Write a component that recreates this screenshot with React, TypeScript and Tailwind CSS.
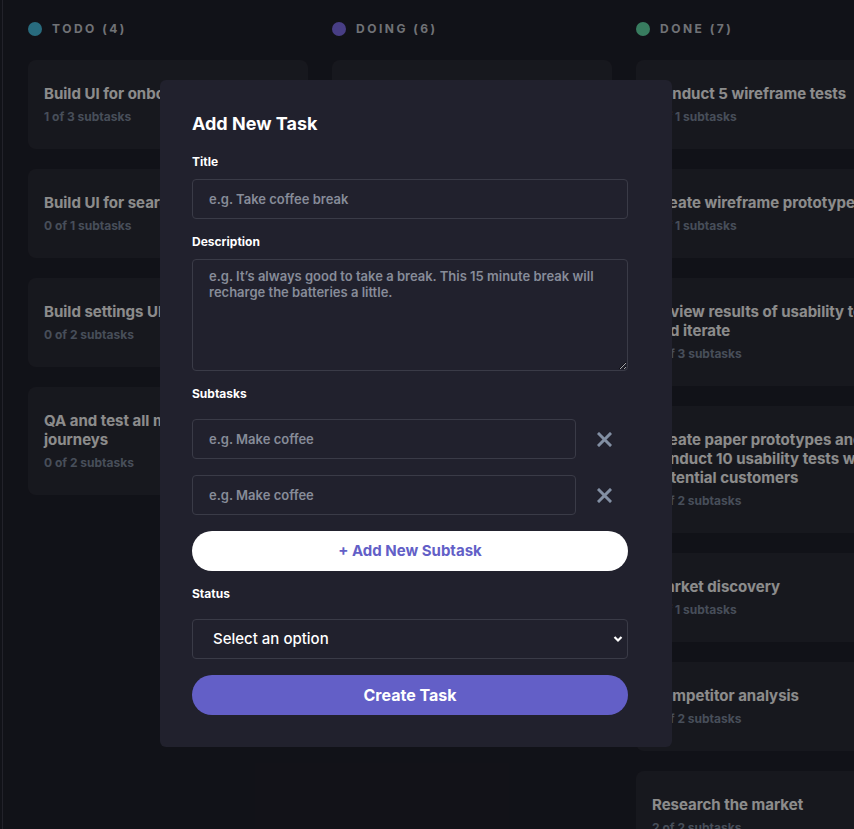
import React from 'react';

type Task = { title: string; done: number; total: number };
type Column = { name: string; dot: string; tasks: Task[] };

const columns: Column[] = [
  {
    name: 'TODO',
    dot: 'bg-[#49c4e5]',
    tasks: [
      { title: 'Build UI for onboarding flow', done: 1, total: 3 },
      { title: 'Build UI for search', done: 0, total: 1 },
      { title: 'Build settings UI', done: 0, total: 2 },
      { title: 'QA and test all major user journeys', done: 0, total: 2 },
    ],
  },
  {
    name: 'DOING',
    dot: 'bg-[#8471f2]',
    tasks: [
      { title: 'Design settings and search pages', done: 1, total: 3 },
      { title: 'Add account endpoints', done: 2, total: 3 },
      { title: 'Design onboarding flow', done: 1, total: 3 },
      { title: 'Add search endpoints', done: 1, total: 2 },
      { title: 'Add authentication endpoints', done: 1, total: 2 },
      { title: 'Research pricing points of various competitors and trial different business models', done: 1, total: 3 },
    ],
  },
  {
    name: 'DONE',
    dot: 'bg-[#67e2ae]',
    tasks: [
      { title: 'Conduct 5 wireframe tests', done: 1, total: 1 },
      { title: 'Create wireframe prototype', done: 1, total: 1 },
      { title: 'Review results of usability tests and iterate', done: 3, total: 3 },
      { title: 'Create paper prototypes and conduct 10 usability tests with potential customers', done: 2, total: 2 },
      { title: 'Market discovery', done: 1, total: 1 },
      { title: 'Competitor analysis', done: 2, total: 2 },
      { title: 'Research the market', done: 2, total: 2 },
    ],
  },
];

const fieldClass =
  'w-full rounded border border-[#3a3b47] bg-transparent px-4 text-[13px] font-semibold text-white placeholder:text-[#878c99] focus:outline-none';

const Cross = () => (
  <svg width="15" height="15" viewBox="0 0 15 15" fill="none">
    <path d="M2 2L13 13M13 2L2 13" stroke="#828fa3" strokeWidth="3" strokeLinecap="square" />
  </svg>
);

const App: React.FC = () => {
  return (
    <div className="relative h-screen w-screen overflow-hidden bg-[#20212c] font-['Inter',sans-serif]">
      {/* Board */}
      <div className="flex h-full">
        <div className="w-[2px] shrink-0" />
        <main className="flex flex-1 gap-6 border-l border-[#3e3f4e] pl-[25px] pt-[21px]">
          {columns.map(col => (
            <section key={col.name} className="w-[280px] shrink-0">
              <div className="mb-[23px] flex h-4 items-center gap-[10px]">
                <span className={`h-[14px] w-[14px] rounded-full ${col.dot}`} />
                <h3 className="text-xs font-bold tracking-[2.5px] text-[#cdd0d8]">
                  {col.name} ({col.tasks.length})
                </h3>
              </div>
              <div className="flex flex-col gap-5">
                {col.tasks.map(t => (
                  <div key={t.title} className="rounded-lg bg-[#2b2c37] px-4 pb-[25px] pt-6">
                    <p className="text-[15px] font-bold leading-[19px] text-white">{t.title}</p>
                    <p className="mt-[6px] text-xs font-bold leading-[15px] text-[#828fa3]">
                      {t.done} of {t.total} subtasks
                    </p>
                  </div>
                ))}
              </div>
            </section>
          ))}
        </main>
      </div>

      {/* Backdrop */}
      <div className="absolute inset-0 bg-black/45" />

      {/* Modal */}
      <div className="absolute left-[160px] top-[80px] w-[512px] rounded-md bg-[#21212d] pb-8 pl-8 pr-11 pt-8">
        <h2 className="text-[18px] font-bold leading-[23px] text-white">Add New Task</h2>

        <label className="mt-[19px] block text-xs font-bold leading-4 text-white">Title</label>
        <input className={`mt-[9px] h-10 ${fieldClass}`} placeholder="e.g. Take coffee break" />

        <label className="mt-[15px] block text-xs font-bold leading-4 text-white">Description</label>
        <textarea
          className={`mt-[9px] block h-[112px] py-2 leading-4 ${fieldClass}`}
          placeholder="e.g. It’s always good to take a break. This 15 minute break will recharge the batteries a little."
        />

        <label className="mt-[15px] block text-xs font-bold leading-4 text-white">Subtasks</label>
        <div className="mt-[17px] flex items-center">
          <input className={`h-10 flex-1 ${fieldClass}`} placeholder="e.g. Make coffee" />
          <div className="flex w-[52px] justify-center pl-1">
            <Cross />
          </div>
        </div>
        <div className="mt-4 flex items-center">
          <input className={`h-10 flex-1 ${fieldClass}`} placeholder="e.g. Make coffee" />
          <div className="flex w-[52px] justify-center pl-1">
            <Cross />
          </div>
        </div>
        <button type="button" className="mt-4 h-10 w-full rounded-full bg-white text-[15px] font-bold text-[#635fc7]">
          + Add New Subtask
        </button>

        <label className="mt-[15px] block text-xs font-bold leading-4 text-white">Status</label>
        <div className="relative mt-[17px]">
          <select
            defaultValue=""
            className="h-10 w-full appearance-none rounded border border-[#3a3b47] bg-transparent pl-5 text-[15px] font-medium text-white focus:outline-none"
          >
            <option value="" className="bg-[#21212d]">Select an option</option>
            <option value="todo" className="bg-[#21212d]">Todo</option>
            <option value="doing" className="bg-[#21212d]">Doing</option>
            <option value="done" className="bg-[#21212d]">Done</option>
          </select>
          <svg
            className="pointer-events-none absolute right-[5px] top-1/2 -translate-y-1/2"
            width="10"
            height="7"
            viewBox="0 0 10 7"
            fill="none"
          >
            <path d="M1.5 1.5L5 5L8.5 1.5" stroke="white" strokeWidth="2.2" />
          </svg>
        </div>

        <button type="button" className="mt-4 h-10 w-full rounded-full bg-[#635fc7] text-base font-bold text-white">
          Create Task
        </button>
      </div>
    </div>
  );
};

export default App;
